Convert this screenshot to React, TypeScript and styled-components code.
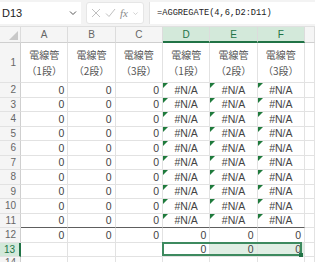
import React from 'react';
import styled, { createGlobalStyle, css } from 'styled-components';

const GlobalStyle = createGlobalStyle`
  html, body {
    margin: 0;
    padding: 0;
    background: #ffffff;
    font-family: 'Liberation Sans', 'Noto Sans CJK JP', sans-serif;
    overflow: hidden;
  }
  * {
    box-sizing: border-box;
  }
`;

const Page = styled.div`
  width: 315px;
  height: 262px;
  display: flex;
  flex-direction: column;
  overflow: hidden;
`;

const FormulaBar = styled.div`
  height: 27px;
  display: flex;
  align-items: center;
  gap: 5px;
  padding: 2px 0 2px 0;
  background: #f3f3f3;
  border-bottom: 1px solid #e0e0e0;
`;

const NameBox = styled.div`
  width: 81px;
  height: 22px;
  display: flex;
  align-items: center;
  justify-content: space-between;
  padding: 0 3px 0 2px;
  background: #ffffff;
  font-size: 11px;
  color: #222;
`;

const ButtonBox = styled.div`
  width: 58px;
  height: 22px;
  display: flex;
  align-items: center;
  justify-content: space-around;
  padding: 0 2px;
  background: #ffffff;
  border: 1px solid #e6e6e6;
  border-radius: 3px;
  color: #b8b8b8;
`;

const Fx = styled.span`
  font-family: 'Liberation Serif', serif;
  font-style: italic;
  font-size: 11px;
  color: #8a8a8a;
`;

const FormulaInput = styled.div`
  flex: 1;
  height: 22px;
  display: flex;
  align-items: center;
  padding-left: 7px;
  background: #ffffff;
  border-left: 1px solid #e3e3e3;
  font-family: 'Liberation Mono', monospace;
  font-size: 8.7px;
  color: #222;
  white-space: nowrap;
`;

const Sheet = styled.div`
  flex: 1;
  display: grid;
  grid-template-columns: 21px repeat(6, 47.33px) 1fr;
  grid-template-rows: 16px 40px repeat(12, 14.5px) 1fr;
  background: #ffffff;
`;

const HeaderCell = styled.div<{ $active?: boolean }>`
  display: flex;
  align-items: center;
  justify-content: center;
  background: #f5f5f5;
  border-right: 1px solid #dcdcdc;
  border-bottom: 1px solid #cfcfcf;
  font-size: 10px;
  color: #666;
  ${(p) =>
    p.$active &&
    css`
      background: #d3e9da;
      color: #217346;
      border-bottom: 2px solid #217346;
    `}
`;

const Corner = styled(HeaderCell)`
  position: relative;
  &::after {
    content: '';
    position: absolute;
    right: 2px;
    bottom: 2px;
    border-left: 9px solid transparent;
    border-bottom: 9px solid #c8c8c8;
  }
`;

const RowHeader = styled.div<{ $active?: boolean }>`
  display: flex;
  align-items: center;
  justify-content: flex-end;
  padding-right: 4px;
  background: #f5f5f5;
  border-right: 1px solid #cfcfcf;
  border-bottom: 1px solid #e2e2e2;
  font-size: 10px;
  color: #666;
  ${(p) =>
    p.$active &&
    css`
      background: #d3e9da;
      color: #217346;
      border-right: 2px solid #217346;
    `}
`;

const Cell = styled.div<{
  $align?: 'left' | 'center' | 'right';
  $warn?: boolean;
  $thick?: boolean;
  $fill?: boolean;
}>`
  position: relative;
  display: flex;
  align-items: center;
  justify-content: ${(p) =>
    p.$align === 'center' ? 'center' : p.$align === 'left' ? 'flex-start' : 'flex-end'};
  padding: 0 3px;
  border-right: 1px solid #e2e2e2;
  border-bottom: 1px solid ${(p) => (p.$thick ? '#5e5e5e' : '#e2e2e2')};
  background: ${(p) => (p.$fill ? '#e0eee4' : 'transparent')};
  font-size: 10.5px;
  color: #444;
  white-space: nowrap;
  ${(p) =>
    p.$warn &&
    css`
      &::before {
        content: '';
        position: absolute;
        left: 0;
        top: 0;
        border-top: 5px solid #1f7a3c;
        border-right: 5px solid transparent;
      }
    `}
`;

const TitleCell = styled(Cell)`
  flex-direction: column;
  justify-content: center;
  gap: 3px;
  font-family: 'Noto Sans CJK JP', sans-serif;
  font-size: 10px;
  color: #555;
  line-height: 13px;
`;

/* selection outline over D13:F13, drawn from inside D13 */
const Selection = styled.div`
  position: absolute;
  left: -1px;
  top: -1px;
  width: calc(300% + 1px);
  height: calc(100% + 1px);
  border: 2px solid #3d8a5f;
  pointer-events: none;
  z-index: 2;
  &::after {
    content: '';
    position: absolute;
    right: -3px;
    bottom: -3px;
    width: 4px;
    height: 4px;
    background: #217346;
  }
`;

const Chevron = ({ size = 9, color = '#666' }: { size?: number; color?: string }) => (
  <svg width={size} height={size} viewBox="0 0 10 10">
    <path d="M2 3.5 L5 6.5 L8 3.5" fill="none" stroke={color} strokeWidth="1" />
  </svg>
);

const cols = ['A', 'B', 'C', 'D', 'E', 'F'];
const titles = ['（1段）', '（2段）', '（3段）', '（1段）', '（2段）', '（3段）'];

export default function App() {
  const rows = [];
  for (let r = 2; r <= 13; r++) {
    rows.push(
      <RowHeader key={`h${r}`} $active={r === 13}>
        {r}
      </RowHeader>
    );
    cols.forEach((c, i) => {
      const errCol = i >= 3;
      let content: string = '';
      if (r <= 11) content = errCol ? '#N/A' : '0';
      else if (r === 12) content = '0';
      else if (r === 13 && errCol) content = '0';
      rows.push(
        <Cell
          key={`${c}${r}`}
          $align={errCol && r <= 11 ? 'center' : 'right'}
          $warn={errCol && r <= 11}
          $thick={r === 11}
          $fill={r === 13 && i >= 4}
        >
          {content}
          {r === 13 && i === 3 && <Selection />}
        </Cell>
      );
    });
    rows.push(<Cell key={`x${r}`} />);
  }

  return (
    <Page>
      <GlobalStyle />
      <FormulaBar>
        <NameBox>
          <span>D13</span>
          <Chevron size={10} color="#555" />
        </NameBox>
        <ButtonBox>
          <svg width="10" height="10" viewBox="0 0 10 10">
            <path d="M1 1 L9 9 M9 1 L1 9" stroke="#c0c0c0" strokeWidth="1" />
          </svg>
          <svg width="11" height="10" viewBox="0 0 11 10">
            <path d="M1 5.5 L4 8.5 L10 1" fill="none" stroke="#c0c0c0" strokeWidth="1" />
          </svg>
          <Fx>fx</Fx>
          <Chevron size={7} color="#c0c0c0" />
        </ButtonBox>
        <FormulaInput>=AGGREGATE(4,6,D2:D11)</FormulaInput>
      </FormulaBar>
      <Sheet>
        <Corner />
        {cols.map((c, i) => (
          <HeaderCell key={c} $active={i >= 3}>
            {c}
          </HeaderCell>
        ))}
        <HeaderCell />
        <RowHeader>1</RowHeader>
        {titles.map((t, i) => (
          <TitleCell key={i}>
            <span>電線管</span>
            <span>{t}</span>
          </TitleCell>
        ))}
        <Cell />
        {rows}
        <RowHeader>14</RowHeader>
        {cols.map((c) => (
          <Cell key={`${c}14`} />
        ))}
        <Cell />
      </Sheet>
    </Page>
  );
}
